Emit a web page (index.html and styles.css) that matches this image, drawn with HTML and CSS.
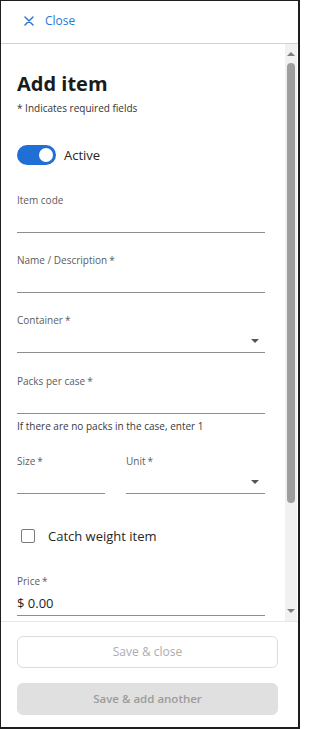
FILE: index.html
```html
<!DOCTYPE html>
<html lang="en">
<head>
<meta charset="utf-8">
<title>Add item</title>
<link rel="stylesheet" href="styles.css">
</head>
<body>
<div class="panel">
  <header class="topbar">
    <button class="close" type="button">
      <svg class="close-icon" width="10" height="10" viewBox="0 0 10 10" aria-hidden="true"><path d="M1 1 L9 9 M9 1 L1 9" stroke="currentColor" stroke-width="1.5" stroke-linecap="round" fill="none"/></svg>
      <span>Close</span>
    </button>
  </header>
  <div class="body">
    <main class="content">
      <h1 class="title">Add item</h1>
      <p class="req">* Indicates required fields</p>
      <div class="toggle-row">
        <span class="toggle"><span class="knob"></span></span>
        <span class="toggle-label">Active</span>
      </div>
      <div class="field first">
        <div class="label">Item code</div>
        <div class="input"></div>
      </div>
      <div class="field">
        <div class="label">Name / Description<span class="ast">*</span></div>
        <div class="input"></div>
      </div>
      <div class="field">
        <div class="label">Container<span class="ast">*</span></div>
        <div class="input select"><span class="caret"></span></div>
      </div>
      <div class="field packs">
        <div class="label">Packs per case<span class="ast">*</span></div>
        <div class="input"></div>
      </div>
      <p class="helper">If there are no packs in the case, enter 1</p>
      <div class="pair">
        <div class="field inline">
          <div class="label">Size<span class="ast">*</span></div>
          <div class="input"></div>
        </div>
        <div class="field inline">
          <div class="label">Unit<span class="ast">*</span></div>
          <div class="input select"><span class="caret"></span></div>
        </div>
      </div>
      <div class="check-row">
        <span class="checkbox"></span>
        <span class="check-label">Catch weight item</span>
      </div>
      <div class="field price">
        <div class="label">Price<span class="ast">*</span></div>
        <div class="input value">$ 0.00</div>
      </div>
    </main>
    <div class="scrollbar" aria-hidden="true">
      <span class="arrow up"></span>
      <span class="thumb"></span>
      <span class="spacer"></span>
      <span class="arrow down"></span>
    </div>
  </div>
  <footer class="actions">
    <button class="btn outline" type="button" disabled>Save &amp; close</button>
    <button class="btn filled" type="button" disabled>Save &amp; add another</button>
  </footer>
</div>
</body>
</html>
```
FILE: styles.css
```css
* { box-sizing: border-box; }
html, body { margin: 0; padding: 0; background: #fff; }
body { font-family: "Open Sans", "Noto Sans", sans-serif; color: #222; }

.panel {
  width: 300px;
  height: 729px;
  display: flex;
  flex-direction: column;
  border-top: 1px solid #1e1e1e;
  border-left: 1px solid #1e1e1e;
  border-right: 2px solid #1e1e1e;
  border-bottom: 2px solid #1e1e1e;
  overflow: hidden;
}

.topbar {
  height: 43px;
  flex: none;
  border-bottom: 1px solid #d2d2d2;
  display: flex;
  align-items: center;
  padding-left: 23px;
}
.close {
  display: flex;
  align-items: center;
  gap: 11px;
  background: none;
  border: 0;
  padding: 0;
  font-family: inherit;
  font-size: 12px;
  line-height: 16px;
  color: #2a78d4;
  margin-top: -3px;
}
.close-icon { display: block; }

.body {
  flex: 1;
  display: flex;
  min-height: 0;
}
.content {
  flex: 1;
  padding: 26px 20px 0 16px;
  overflow: hidden;
}

.title {
  margin: 0;
  font-size: 20px;
  line-height: 28px;
  font-weight: 700;
  color: #1b1b1b;
}
.req {
  margin: 3px 0 0;
  font-size: 10px;
  line-height: 14px;
  color: #333;
}

.toggle-row {
  margin-top: 30px;
  height: 20px;
  display: flex;
  align-items: center;
  gap: 8px;
}
.toggle {
  width: 39px;
  height: 20px;
  border-radius: 10px;
  background: #1f6fd5;
  display: flex;
  align-items: center;
  justify-content: flex-end;
  padding-right: 3px;
}
.knob {
  width: 14px;
  height: 14px;
  border-radius: 50%;
  background: #fff;
}
.toggle-label {
  font-size: 13px;
  line-height: 18px;
  color: #262626;
}

.field { margin-top: 20px; }
.field.first { margin-top: 28px; }
.field.packs { margin-top: 21px; }
.label {
  font-size: 10px;
  line-height: 14px;
  color: #5c5c5c;
}
.ast { margin-left: 2px; }
.input {
  height: 26px;
  border-bottom: 1px solid #8d8d8d;
}
.input.select {
  display: flex;
  justify-content: flex-end;
  align-items: flex-end;
  padding: 0 6px 9px 0;
}
.caret {
  width: 0;
  height: 0;
  border-left: 4px solid transparent;
  border-right: 4px solid transparent;
  border-top: 4px solid #555;
}
.helper {
  margin: 5px 0 0;
  font-size: 10px;
  line-height: 14px;
  color: #3a3a3a;
}

.pair {
  margin-top: 21px;
  display: grid;
  grid-template-columns: 88px 1fr;
  column-gap: 21px;
}
.field.inline { margin-top: 0; }

.check-row {
  margin-top: 32px;
  height: 20px;
  display: flex;
  align-items: center;
  gap: 13px;
  padding-left: 4px;
}
.checkbox {
  width: 14px;
  height: 14px;
  border: 1.5px solid #7a7a7a;
  border-radius: 2px;
}
.check-label {
  font-size: 13px;
  line-height: 18px;
  color: #262626;
}

.field.price { margin-top: 28px; }
.input.value {
  height: auto;
  padding: 5px 0 2px;
  font-size: 13px;
  line-height: 20px;
  color: #1e1e1e;
}

.scrollbar {
  width: 12px;
  margin-right: 1px;
  flex: none;
  background: #f1f1f1;
  display: flex;
  flex-direction: column;
  align-items: center;
  padding: 8px 0 8px;
}
.arrow {
  width: 0;
  height: 0;
  border-left: 4px solid transparent;
  border-right: 4px solid transparent;
  flex: none;
}
.arrow.up { border-bottom: 4px solid #7d7d7d; }
.arrow.down { border-top: 4px solid #7d7d7d; }
.thumb {
  margin-top: 7px;
  width: 8px;
  height: 440px;
  border-radius: 4px;
  background: #9e9e9e;
  flex: none;
}
.spacer { flex: 1; }

.actions {
  flex: none;
  border-top: 1px solid #e6e6e6;
  padding: 14px 20px 12px 16px;
  display: flex;
  flex-direction: column;
  gap: 15px;
}
.btn {
  height: 32px;
  border-radius: 6px;
  font-family: inherit;
  font-size: 12px;
  line-height: 16px;
  font-weight: 400;
}
.btn.outline {
  background: #fff;
  border: 1px solid #dcdcdc;
  color: #adadad;
}
.btn.filled {
  background: #e0e0e0;
  border: 1px solid #e0e0e0;
  color: #9c9c9c;
  font-weight: 600;
  font-size: 11.5px;
}
```
